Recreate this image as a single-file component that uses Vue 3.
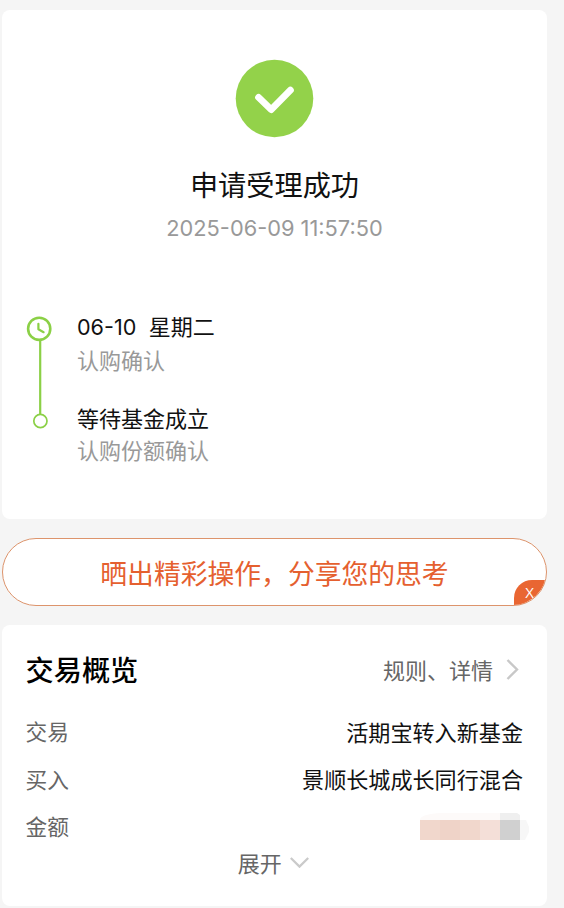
<script setup>
const rows = [
  { label: '交易', value: '活期宝转入新基金' },
  { label: '买入', value: '景顺长城成长同行混合' },
]
</script>

<template>
  <main class="page">
    <section class="card result">
      <svg class="success" width="78" height="78" viewBox="0 0 78 78">
        <circle cx="38.5" cy="38.5" r="38.8" fill="#93d24a" />
        <path d="M22.6 37.4 L35.2 49.6 L54.4 30.2" fill="none" stroke="#fff" stroke-width="6.8" stroke-linecap="round" stroke-linejoin="round" />
      </svg>
      <h1 class="title">申请受理成功</h1>
      <p class="time">2025-06-09 11:57:50</p>
      <div class="timeline">
        <svg class="track" width="26" height="114" viewBox="0 0 26 114">
          <path d="M14.2 25V99" stroke="#8bd046" stroke-width="2.2" />
          <circle cx="13.2" cy="12.8" r="11.1" fill="#fff" stroke="#8bd046" stroke-width="2.6" />
          <path d="M12.4 7.8V13.2L17.6 16.2" fill="none" stroke="#8bd046" stroke-width="2.2" stroke-linecap="round" stroke-linejoin="round" />
          <circle cx="14.4" cy="105" r="6.6" fill="#fff" stroke="#8bd046" stroke-width="1.7" />
        </svg>
        <div class="steps">
          <div class="step">
            <p class="name dated"><span class="day">06-10</span><span>星期二</span></p>
            <p class="note">认购确认</p>
          </div>
          <div class="step">
            <p class="name">等待基金成立</p>
            <p class="note">认购份额确认</p>
          </div>
        </div>
      </div>
    </section>

    <section class="share">
      <span class="share-text">晒出精彩操作，分享您的思考</span>
      <span class="close">X</span>
    </section>

    <section class="card overview">
      <header class="head">
        <h2>交易概览</h2>
        <span class="link">规则、详情
          <svg width="13" height="22" viewBox="0 0 13 22"><path d="M1.5 2L11 11.5L1.5 21" fill="none" stroke="#c8c8c8" stroke-width="2.4" /></svg>
        </span>
      </header>
      <div v-for="row in rows" :key="row.label" class="row">
        <span class="label">{{ row.label }}</span>
        <span class="value">{{ row.value }}</span>
      </div>
      <div class="row">
        <span class="label">金额</span>
        <svg class="mask" width="109" height="30" viewBox="0 0 109 30">
          <path d="M0 10Q0 4 22 3H80V10Z" fill="#fdfaf9" />
          <path d="M80 3H97L100 5V10H80Z" fill="#efefef" />
          <path d="M100 10H106L109 17V22L105 30H100Z" fill="#f7f7f7" />
          <path d="M0 10H20V30H0Z" fill="#f1d7cc" />
          <path d="M20 10H40V30H20Z" fill="#efd3c8" />
          <path d="M40 10H60V30H40Z" fill="#f1d7cc" />
          <path d="M60 10H80V30H60Z" fill="#f4dfd8" />
          <path d="M80 10H100V30H80Z" fill="#d0d0d0" />
        </svg>
      </div>
      <div class="expand">展开
        <svg width="19" height="12" viewBox="0 0 19 12"><path d="M.8 2L9.5 10.6L18.2 2" fill="none" stroke="#cacaca" stroke-width="2.3" /></svg>
      </div>
    </section>
  </main>
</template>

<style>
body { background: #f5f5f5; }
</style>

<style scoped>
.page {
  box-sizing: border-box;
  height: 908px;
  padding: 10px 17px 0 2px;
  overflow: hidden;
  background: #f5f5f5;
  font-family: "Noto Sans CJK SC", sans-serif;
  font-size: 22px;
  color: #111;
}
h1, h2, p { margin: 0; font-weight: 400; }
svg { display: block; flex: none; }
.success { overflow: visible; }
.card { box-sizing: border-box; background: #fff; border-radius: 8px; }
.result {
  height: 509px;
  padding: 50px 24px 0;
  display: flex;
  flex-direction: column;
  align-items: center;
}
.title { margin-top: 26px; font-size: 28.2px; line-height: 40px; }
.time {
  margin-top: 9px;
  font-family: Inter, sans-serif;
  font-size: 21.8px;
  line-height: 30px;
  color: #999;
  white-space: nowrap;
}
.timeline { align-self: stretch; display: flex; gap: 25px; margin-top: 73px; }
.steps { display: flex; flex-direction: column; gap: 26px; margin-top: -7px; }
.name, .note { line-height: 32px; white-space: nowrap; }
.note { color: #999; }
.dated { display: flex; align-items: baseline; height: 34px; }
.day { font-family: Inter, sans-serif; font-size: 21.6px; margin-right: 12.5px; }
.share {
  position: relative;
  box-sizing: border-box;
  height: 68px;
  margin: 19px 0;
  display: flex;
  align-items: center;
  justify-content: center;
  overflow: hidden;
  border: 1.5px solid #dd946c;
  border-radius: 34px;
  background: #fff;
}
.share-text { margin-top: 1px; font-size: 26.8px; line-height: 40px; color: #e5602f; white-space: nowrap; }
.close {
  position: absolute;
  right: 0;
  bottom: 0;
  box-sizing: border-box;
  width: 32px;
  height: 25px;
  padding-right: 1px;
  border-radius: 18px 0 0 0;
  background: #e96632;
  color: #fff;
  font: 400 15px/25px "Open Sans", sans-serif;
  text-align: center;
}
.overview { height: 281px; padding: 21px 24px 0 23.5px; }
.head { display: flex; justify-content: space-between; align-items: center; height: 46px; margin-bottom: 15px; padding-right: 4px; }
h2 { font-size: 28.2px; line-height: 46px; font-weight: 500; color: #000; }
.link { display: flex; align-items: center; gap: 13px; color: #666; }
.row { display: flex; justify-content: space-between; align-items: center; height: 47.5px; }
.label { font-size: 21.7px; }
.value { font-size: 22.1px; }
.label, .expand { color: #666; }
.mask { margin: -2px -6px 0 0; }
.expand { display: flex; align-items: center; justify-content: center; gap: 8px; margin-top: -1px; padding-right: 2px; line-height: 26px; }
</style>
